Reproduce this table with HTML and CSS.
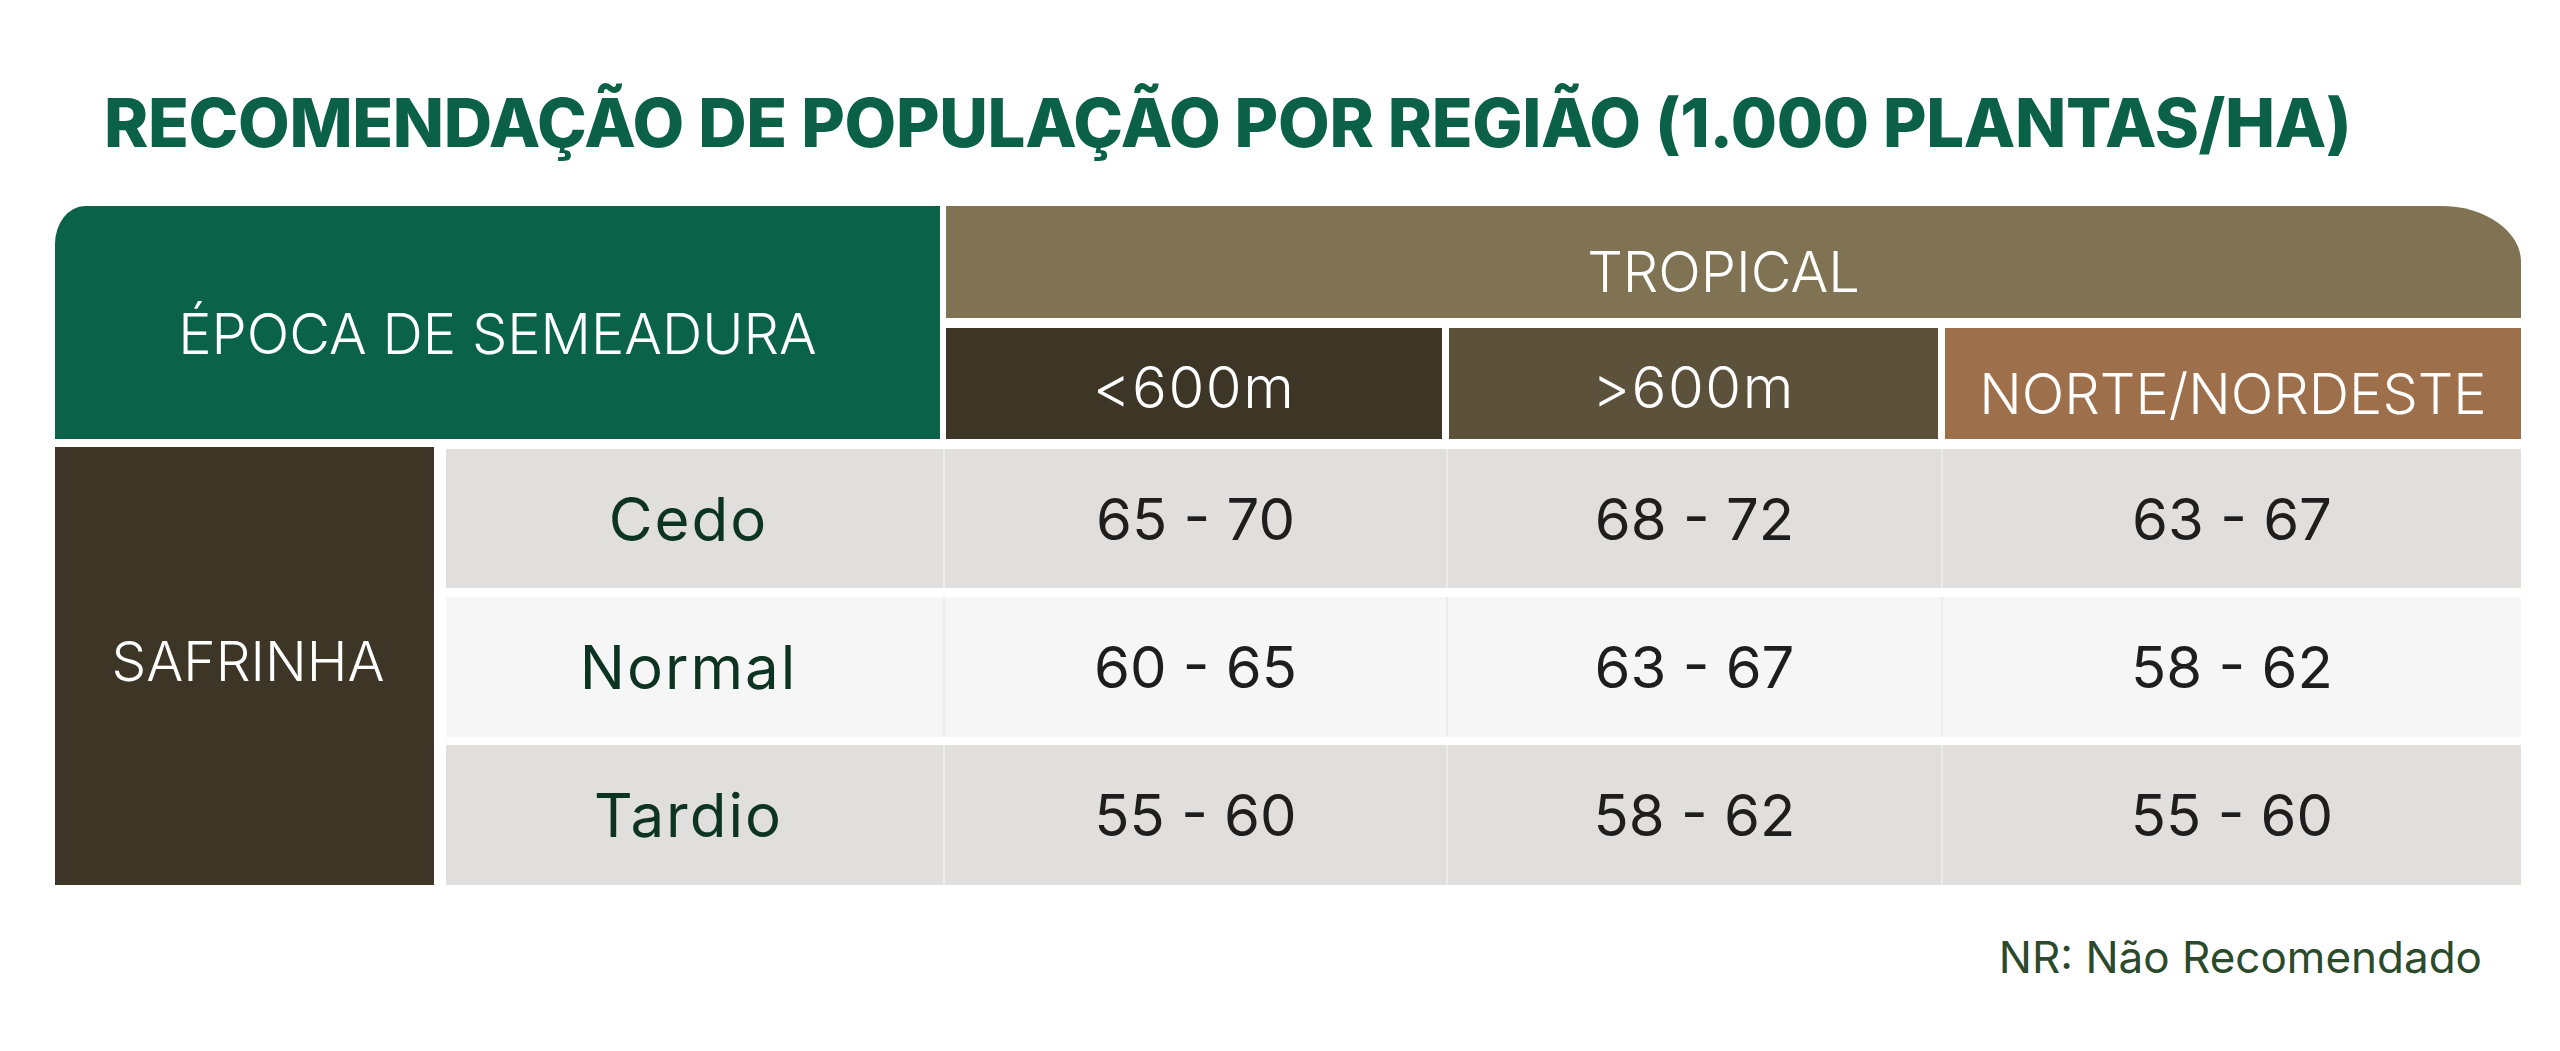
FILE: index.html
```html
<!DOCTYPE html>
<html lang="pt-BR">
<head>
<meta charset="utf-8">
<title>Recomendação de população por região</title>
<link rel="stylesheet" href="styles.css">
</head>
<body>
<div class="page">
  <h1 class="title">RECOMENDAÇÃO DE POPULAÇÃO POR REGIÃO (1.000 PLANTAS/HA)</h1>
  <div class="table">
    <div class="head">
      <div class="h-epoca"><span>ÉPOCA DE SEMEADURA</span></div>
      <div class="h-right">
        <div class="h-tropical"><span>TROPICAL</span></div>
        <div class="h-sub">
          <div class="h-col h-low"><span>&lt;600m</span></div>
          <div class="h-col h-high"><span>&gt;600m</span></div>
          <div class="h-col h-nne"><span>NORTE/NORDESTE</span></div>
        </div>
      </div>
    </div>
    <div class="body">
      <div class="b-season"><span>SAFRINHA</span></div>
      <div class="grid">
        <div class="cell lbl">Cedo</div>
        <div class="cell num c1">65 - 70</div>
        <div class="cell num c2">68 - 72</div>
        <div class="cell num c3">63 - 67</div>

        <div class="cell lbl alt">Normal</div>
        <div class="cell num c1 alt">60 - 65</div>
        <div class="cell num c2 alt">63 - 67</div>
        <div class="cell num c3 alt">58 - 62</div>

        <div class="cell lbl">Tardio</div>
        <div class="cell num c1">55 - 60</div>
        <div class="cell num c2">58 - 62</div>
        <div class="cell num c3">55 - 60</div>
      </div>
    </div>
  </div>
  <p class="note">NR: Não Recomendado</p>
</div>
</body>
</html>
```

FILE: styles.css
```css
html, body {
  margin: 0;
  padding: 0;
  background: #ffffff;
}

body {
  font-family: Inter, "Noto Sans", sans-serif;
  width: 2560px;
  height: 1051px;
  overflow: hidden;
}

.page {
  padding-left: 55px;
  width: 2466px;
}

.title {
  margin: 0 0 0 49px;
  padding-top: 89px;
  height: 206px;
  box-sizing: border-box;
  font-size: 67px;
  line-height: 67px;
  font-weight: 800;
  color: #0b6148;
  letter-spacing: -0.35px;
  white-space: nowrap;
}

.table {
  width: 2466px;
  display: flex;
  flex-direction: column;
}

.head {
  display: flex;
  gap: 6px;
  height: 233px;
}

.h-epoca {
  width: 885px;
  box-sizing: border-box;
  padding-top: 22px;
  background: #0a6349;
  border-top-left-radius: 30px 38px;
  color: #ffffff;
  display: flex;
  align-items: center;
  justify-content: center;
  font-size: 56px;
  font-weight: 300;
}

.h-right {
  flex: 1;
  display: flex;
  flex-direction: column;
  gap: 10px;
}

.h-tropical {
  height: 112px;
  box-sizing: border-box;
  padding-top: 20px;
  padding-right: 20px;
  background: #807354;
  border-top-right-radius: 80px 56px;
  color: #ffffff;
  display: flex;
  align-items: center;
  justify-content: center;
  font-size: 56px;
  font-weight: 300;
}

.h-sub {
  flex: 1;
  display: flex;
  gap: 7px;
}

.h-col {
  box-sizing: border-box;
  padding-top: 7px;
  color: #ffffff;
  display: flex;
  align-items: center;
  justify-content: center;
  font-size: 58px;
  font-weight: 300;
  letter-spacing: 1.5px;
}

.h-low { width: 496px; background: #3d3626; }
.h-high { width: 489px; background: #5c523c; }
.h-nne {
  flex: 1;
  background: #9e6f4b;
  padding-top: 20px;
  font-size: 56px;
  letter-spacing: 0;
}

.body {
  margin-top: 8px;
  display: flex;
  gap: 12px;
  height: 438px;
}

.b-season {
  width: 379px;
  box-sizing: border-box;
  padding-bottom: 10px;
  padding-left: 7px;
  background: #3d3626;
  color: #ffffff;
  display: flex;
  align-items: center;
  justify-content: center;
  font-size: 55px;
  font-weight: 300;
}

.grid {
  flex: 1;
  padding-top: 2px;
  display: grid;
  grid-template-columns: 497px 503px 495px 1fr;
  grid-template-rows: 139px 140px 140px;
  row-gap: 8.5px;
}

.cell {
  background: #e0dfdd;
  display: flex;
  align-items: center;
  justify-content: center;
  font-size: 58px;
  font-weight: 400;
}

.cell.alt {
  background: #f6f6f6;
}

.cell.num {
  border-left: 2px solid #ececec;
  color: #1e1e1e;
}

.cell.lbl {
  box-sizing: border-box;
  padding-right: 12px;
  color: #0d3322;
  font-size: 60px;
  letter-spacing: 2px;
}

.note {
  margin: 46px 39px 0 0;
  text-align: right;
  font-size: 44px;
  line-height: 53px;
  color: #2b4a2b;
}
```
